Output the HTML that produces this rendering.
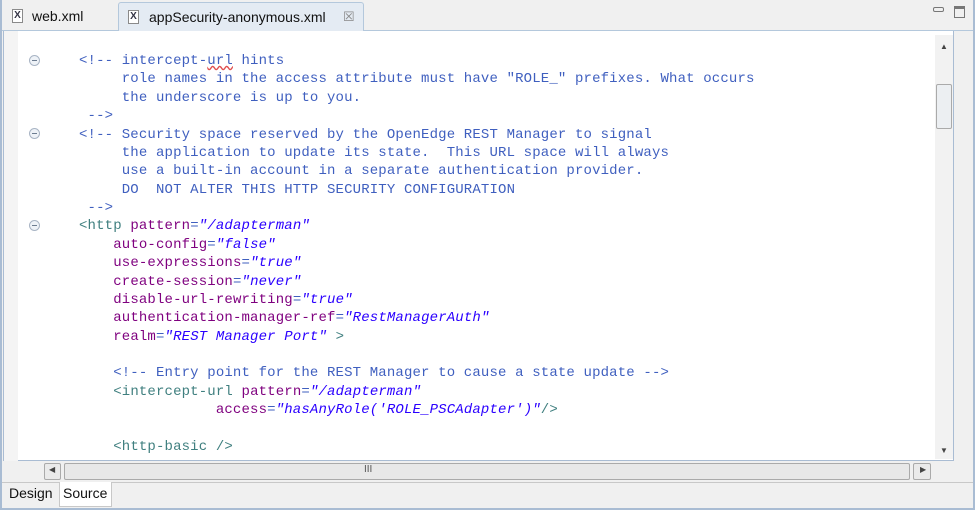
<!DOCTYPE html>
<html><head><meta charset="utf-8"><style>
*{margin:0;padding:0;box-sizing:border-box}
body{width:975px;height:510px;overflow:hidden;background:#f0f0f0;font-family:"Liberation Sans",sans-serif;position:relative}
.frame{position:absolute;left:0;top:0;width:975px;height:510px;border:2px solid #a9bcd3;border-top:none}
.tabbar{position:absolute;left:2px;top:0;width:971px;height:31px;background:#f0f0f0;border-bottom:1px solid #b4c8dc}
.tab{position:absolute;top:2px;height:29px;font-size:14px;line-height:28px;color:#111}
.ico{position:absolute;top:7px;width:11px;height:14px;border:1px solid #8a8a8a;background:#fff;font-size:10px;line-height:12px;text-align:center;font-weight:bold;color:#334}
.editor{position:absolute;left:3px;top:31px;width:951px;height:430px;background:#fff;border:1px solid #a9bcd3;border-top:none}
.gut{position:absolute;left:0;top:0;width:14px;height:430px;background:#f4f4f4}
pre{position:absolute;left:79px;top:52px;font-family:"Liberation Mono",monospace;font-size:14px;letter-spacing:0.15px;line-height:18.38px;color:#3f5fbf}
.t{color:#3f7f7f}.a{color:#7f007f}.v{color:#2a00ff;font-style:italic}
.fold{position:absolute;left:29px;width:11px;height:11px;border-radius:50%;border:1px solid #a8b4c4;background:#eef2f7}
.fold:after{content:"";position:absolute;left:2px;top:4px;width:5px;height:1px;background:#6c7c90}
.vs{position:absolute;left:935px;top:35px;width:18px;height:424px;background:#f2f2f2}
.hs{position:absolute;left:44px;top:463px;width:888px;height:17px;background:#f0f0f0}
.btn{position:absolute;background:#eaeaea;border:1px solid #aaa;border-radius:2px}
</style></head><body>
<div class="frame"></div>
<div class="tabbar">
 <div class="tab" style="left:4px;width:112px"><div class="ico" style="left:6px">X</div><span style="position:absolute;left:26px">web.xml</span></div>
 <div class="tab" style="left:116px;width:246px;background:#e4ebf3;border:1px solid #b4c8dc;border-bottom:none;border-radius:3px 3px 0 0"><div class="ico" style="left:9px">X</div><span style="position:absolute;left:30px">appSecurity-anonymous.xml</span><span style="position:absolute;left:224px;color:#888;font-size:13px">☒</span></div>
 <div style="position:absolute;left:931px;top:7px;width:11px;height:5px;border:1px solid #777;border-radius:2px"></div>
 <div style="position:absolute;left:952px;top:6px;width:11px;height:12px;border:1px solid #777;border-top-width:3px"></div>
</div>
<div class="editor"><div class="gut"></div></div>
<div class="fold" style="top:55px"></div>
<div class="fold" style="top:128px"></div>
<div class="fold" style="top:220px"></div>
<pre>&lt;!-- intercept-<span style="text-decoration:underline wavy #e05050">url</span> hints
     role names in the access attribute must have "ROLE_" prefixes. What occurs
     the underscore is up to you.
 --&gt;
&lt;!-- Security space reserved by the OpenEdge REST Manager to signal
     the application to update its state.  This URL space will always
     use a built-in account in a separate authentication provider.
     DO  NOT ALTER THIS HTTP SECURITY CONFIGURATION
 --&gt;
<span class="t">&lt;http</span> <span class="a">pattern</span>=<span class="v">"/adapterman"</span>
    <span class="a">auto-config</span>=<span class="v">"false"</span>
    <span class="a">use-expressions</span>=<span class="v">"true"</span>
    <span class="a">create-session</span>=<span class="v">"never"</span>
    <span class="a">disable-url-rewriting</span>=<span class="v">"true"</span>
    <span class="a">authentication-manager-ref</span>=<span class="v">"RestManagerAuth"</span>
    <span class="a">realm</span>=<span class="v">"REST Manager Port"</span> <span class="t">&gt;</span>

    &lt;!-- Entry point for the REST Manager to cause a state update --&gt;
    <span class="t">&lt;intercept-url</span> <span class="a">pattern</span>=<span class="v">"/adapterman"</span>
                <span class="a">access</span>=<span class="v">"hasAnyRole('ROLE_PSCAdapter')"</span><span class="t">/&gt;</span>

    <span class="t">&lt;http-basic /&gt;</span></pre>
<div class="vs"></div>
<div style="position:absolute;left:940px;top:42px;color:#444;font-size:8px">▲</div>
<div class="btn" style="left:936px;top:84px;width:16px;height:45px;background:#eceff2"></div>
<div style="position:absolute;left:940px;top:446px;color:#444;font-size:8px">▼</div>
<div class="hs"></div>
<div class="btn" style="left:44px;top:463px;width:17px;height:17px"></div>
<div style="position:absolute;left:49px;top:465px;color:#444;font-size:8px">◀</div>
<div class="btn" style="left:64px;top:463px;width:846px;height:17px;background:#e8e8e8"></div>
<div style="position:absolute;left:364px;top:464px;color:#555;font-size:10px">III</div>
<div class="btn" style="left:913px;top:463px;width:18px;height:17px"></div>
<div style="position:absolute;left:920px;top:465px;color:#444;font-size:8px">▶</div>
<div style="position:absolute;left:2px;top:482px;width:971px;height:1px;background:#c8c8c8"></div>
<div style="position:absolute;left:9px;top:485px;font-size:14px;color:#111">Design</div>
<div style="position:absolute;left:59px;top:482px;width:53px;height:25px;background:#fff;border:1px solid #c8c8c8;border-top:none"></div>
<div style="position:absolute;left:63px;top:485px;font-size:14px;color:#111">Source</div>
</body></html>
